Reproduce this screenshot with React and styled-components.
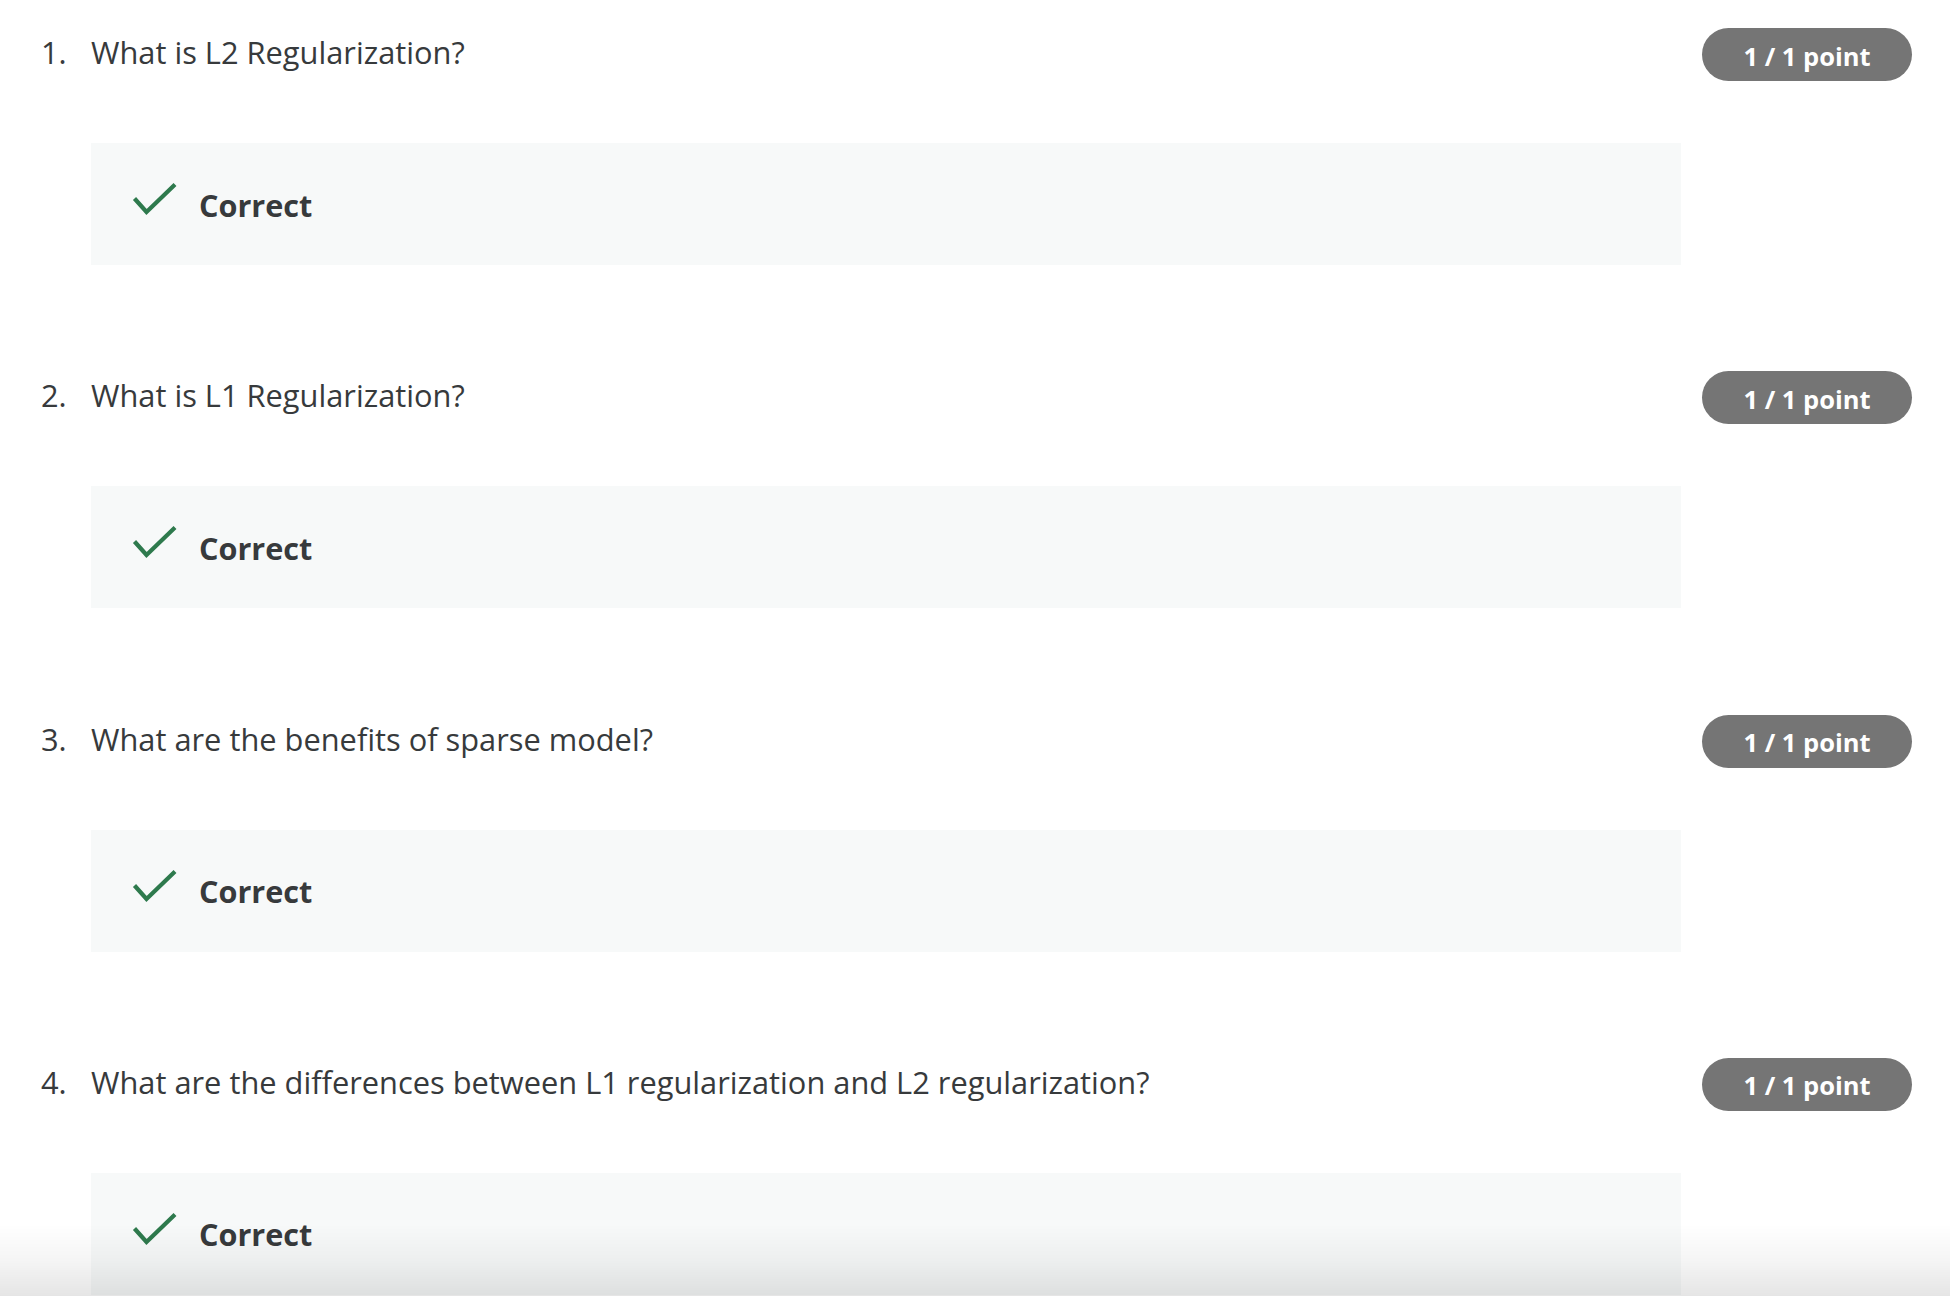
import React from "react";
import styled, { createGlobalStyle } from "styled-components";

const GlobalStyle = createGlobalStyle`
  html, body {
    margin: 0;
    padding: 0;
    background: #ffffff;
  }
  body {
    font-family: "Open Sans", "Noto Sans", Arial, sans-serif;
    color: #333333;
    -webkit-font-smoothing: antialiased;
  }
`;

const Page = styled.main`
  padding: 29px 38px 0 41px;
  overflow: hidden;
  height: 1296px;
  box-sizing: border-box;
`;

const QuestionBlock = styled.section`
  display: grid;
  grid-template-columns: 1fr auto;
  column-gap: 21px;
  align-items: start;
  padding-bottom: 107.3px;
`;

const Main = styled.div`
  display: flex;
  flex-direction: column;
`;

const Header = styled.div`
  display: flex;
  align-items: baseline;
  font-size: 30.8px;
  line-height: 46px;
  color: #373a3c;
  font-weight: 400;
`;

const Number = styled.span`
  width: 50px;
  flex: none;
`;

const Prompt = styled.span`
  flex: 1;
`;

const Feedback = styled.div`
  margin: 68px 0 0 50px;
  height: 122px;
  background: #f7f9f9;
  display: flex;
  align-items: center;
  padding-left: 41px;
  gap: 22px;
`;

const CheckIcon = styled.svg`
  width: 45px;
  height: 34px;
  flex: none;
  margin-top: -10px;
`;

const FeedbackText = styled.span`
  font-size: 30.6px;
  font-weight: 700;
  color: #373a3c;
  line-height: 1.4;
  margin-top: 2px;
`;

const Badge = styled.div`
  width: 210px;
  height: 53px;
  margin-top: -1px;
  border-radius: 27px;
  background: #757575;
  color: #ffffff;
  font-size: 25.5px;
  font-weight: 700;
  display: flex;
  align-items: center;
  justify-content: center;
  padding-top: 2px;
  box-sizing: border-box;
`;

const BottomFade = styled.div`
  position: fixed;
  left: 0;
  right: 0;
  bottom: 0;
  height: 72px;
  pointer-events: none;
  background: linear-gradient(to bottom, rgba(0, 0, 0, 0) 0%, rgba(0, 0, 0, 0.04) 50%, rgba(0, 0, 0, 0.1) 100%);
`;

const questions = [
  "What is L2 Regularization?",
  "What is L1 Regularization?",
  "What are the benefits of sparse model?",
  "What are the differences between L1 regularization and L2 regularization?",
];

function Check() {
  return (
    <CheckIcon viewBox="0 0 45 34" aria-hidden="true">
      <polyline
        points="2.5,16.5 14.5,30 43,2.5"
        fill="none"
        stroke="#2e7a4d"
        strokeWidth="4.2"
        strokeLinejoin="miter"
      />
    </CheckIcon>
  );
}

export default function App() {
  return (
    <>
      <GlobalStyle />
      <Page>
        {questions.map((q, i) => (
          <QuestionBlock key={i}>
            <Main>
              <Header>
                <Number>{i + 1}.</Number>
                <Prompt>{q}</Prompt>
              </Header>
              <Feedback>
                <Check />
                <FeedbackText>Correct</FeedbackText>
              </Feedback>
            </Main>
            <Badge>1 / 1 point</Badge>
          </QuestionBlock>
        ))}
      </Page>
      <BottomFade />
    </>
  );
}
